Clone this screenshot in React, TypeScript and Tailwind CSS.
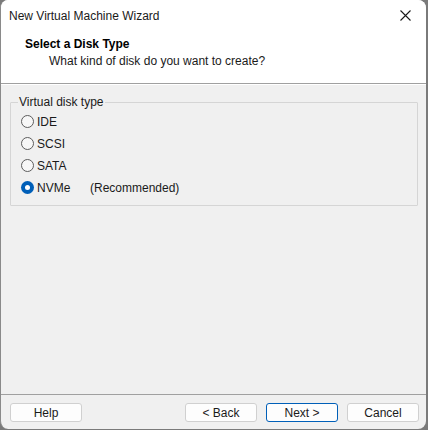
import React from 'react';

const options = [
  { id: 'ide', label: 'IDE' },
  { id: 'scsi', label: 'SCSI' },
  { id: 'sata', label: 'SATA' },
  { id: 'nvme', label: 'NVMe', note: '(Recommended)' },
];

function Radio({ checked }: { checked: boolean }) {
  if (checked) {
    return (
      <span className="w-[13px] h-[13px] rounded-full bg-[#005fb8] flex items-center justify-center">
        <span className="w-[5px] h-[5px] rounded-full bg-white" />
      </span>
    );
  }
  return <span className="w-[13px] h-[13px] rounded-full border border-[#5d5d5d] bg-[#f7f7f7]" />;
}

function Button({ label, primary }: { label: string; primary?: boolean }) {
  return (
    <button
      className={
        primary
          ? 'w-[72px] h-[19px] rounded-[3px] border border-[#005fb8] bg-[#fdfdfd] text-[12px] leading-none text-[#1a1a1a]'
          : 'w-[72px] h-[19px] rounded-[3px] border border-[#d0d0d0] bg-[#fdfdfd] text-[12px] leading-none text-[#1a1a1a]'
      }
    >
      {label}
    </button>
  );
}

export default function App() {
  const selected = 'nvme';

  return (
    <div
      className="w-[428px] h-[430px] bg-[#7a7a7a] overflow-hidden"
      style={{ fontFamily: '"Liberation Sans", Arial, sans-serif' }}
    >
      <div className="w-[426px] h-[429px] flex flex-col bg-[#f0f0f0] rounded-lg overflow-hidden border-l border-[#8a8a8a]">
        {/* title bar */}
        <div className="h-[31px] flex items-center justify-between bg-white pl-[8px] pr-[13px]">
          <span className="text-[12px] text-[#1a1a1a]">New Virtual Machine Wizard</span>
          <svg width="11" height="11" viewBox="0 0 11 11" className="mr-[2px]">
            <path d="M0.5 0.5 L10.5 10.5 M10.5 0.5 L0.5 10.5" stroke="#1a1a1a" strokeWidth="1.1" />
          </svg>
        </div>

        {/* header */}
        <div className="h-[53px] bg-white border-b border-[#a0a0a0] pl-[24px] pt-[6px]">
          <div className="text-[12px] font-bold text-[#000] leading-[15px]">Select a Disk Type</div>
          <div className="text-[12px] text-[#1a1a1a] leading-[15px] pl-[24px] mt-[2px]">
            What kind of disk do you want to create?
          </div>
        </div>

        {/* body */}
        <div className="flex-1 pt-[8px] pl-[9px] pr-[8px] border-t border-white">
          <fieldset className="border border-[#d5d5d5] rounded-[1px] h-[113px] pl-[10px] pt-[4px] mx-0">
            <legend className="text-[12px] text-[#1a1a1a] px-[1px] ml-[-3px]">Virtual disk type</legend>
            <div className="flex flex-col gap-[9px]">
              {options.map((o) => (
                <div key={o.id} className="flex items-center h-[13px]">
                  <Radio checked={o.id === selected} />
                  <span className="ml-[3px] text-[12px] text-[#1a1a1a] w-[53px]">{o.label}</span>
                  {o.note && <span className="text-[12px] text-[#1a1a1a]">{o.note}</span>}
                </div>
              ))}
            </div>
          </fieldset>
        </div>

        {/* footer */}
        <div className="h-[35px] border-t border-[#a0a0a0] flex items-center pl-[9px] pr-[7px] pt-[1px]">
          <Button label="Help" />
          <div className="flex-1" />
          <div className="flex gap-[9px]">
            <Button label="< Back" />
            <Button label="Next >" primary />
            <Button label="Cancel" />
          </div>
        </div>
      </div>
    </div>
  );
}
